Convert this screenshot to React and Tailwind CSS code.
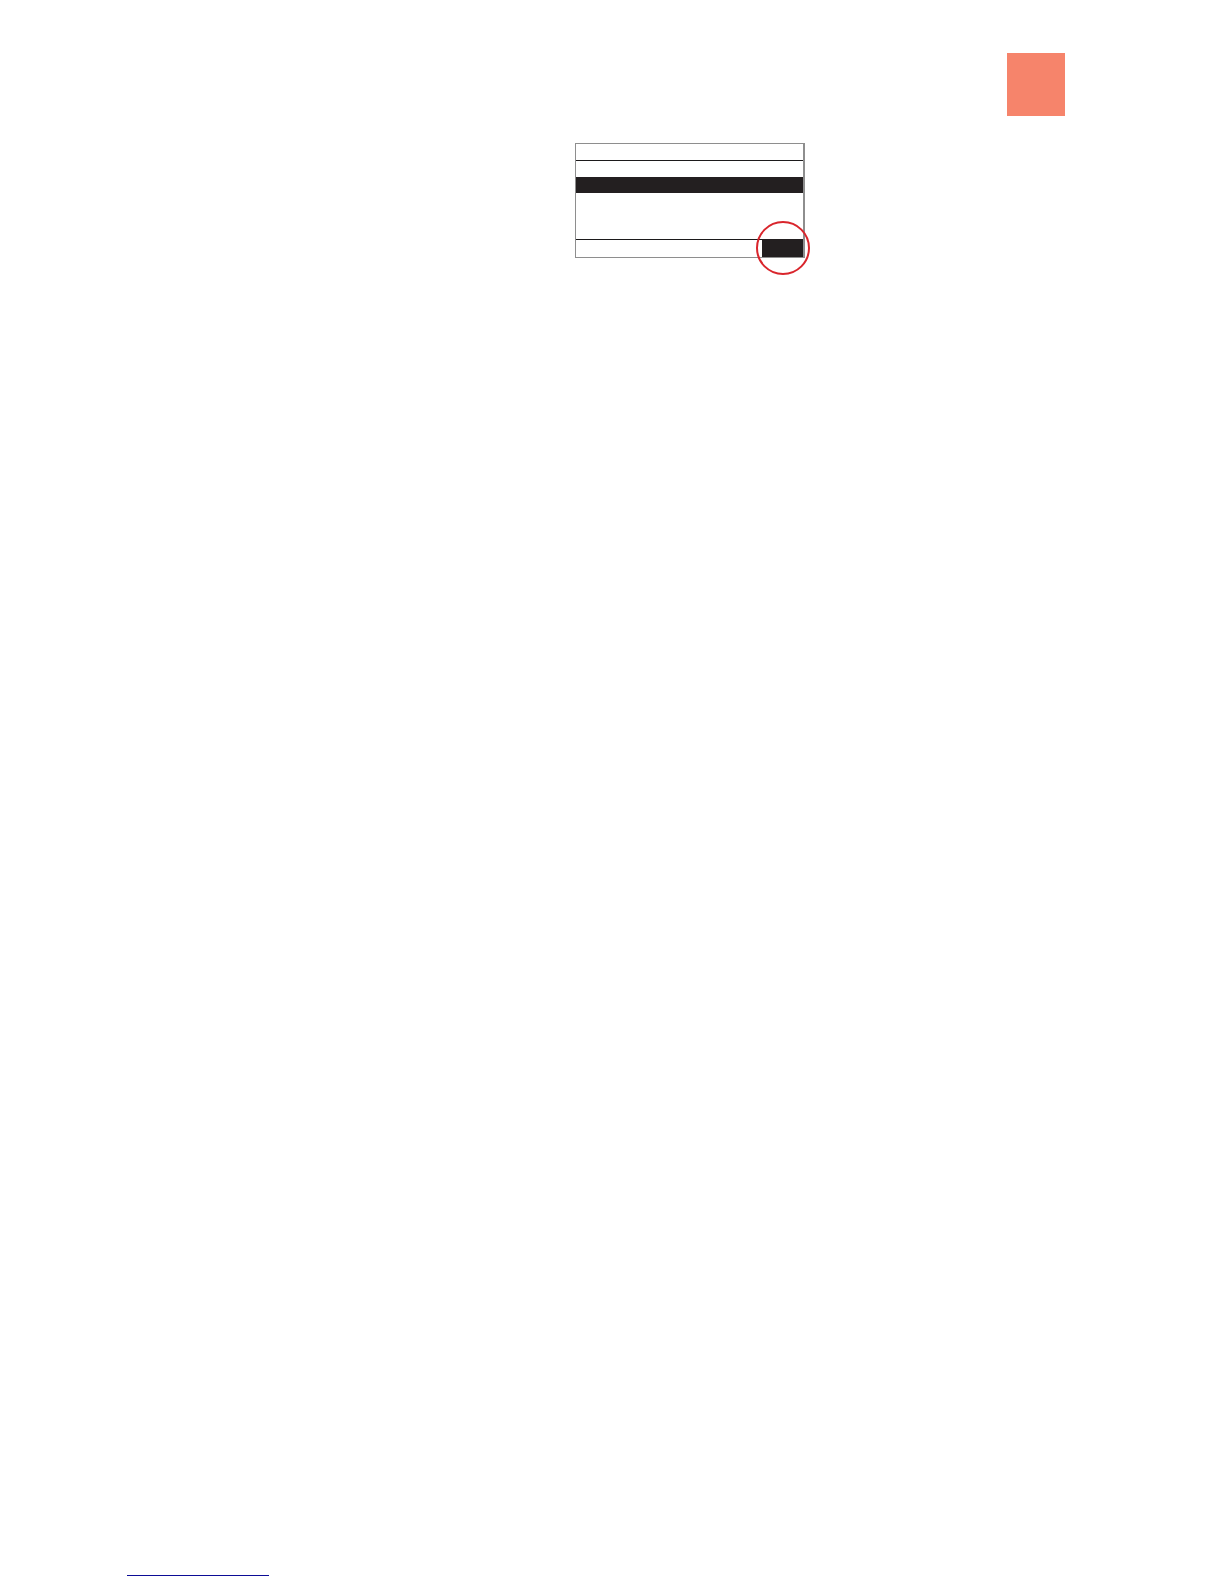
import React from "react";

const PageTab = () => (
  <div className="flex justify-end">
    <div className="h-[63px] w-[58px] bg-[#f6846b]" />
  </div>
);

const Highlight = () => (
  <svg
    className="pointer-events-none absolute -right-2 -bottom-[19px] h-14 w-14"
    viewBox="0 0 56 56"
    fill="none"
    aria-hidden="true"
  >
    <circle cx="28" cy="28" r="26" stroke="#d9252c" strokeWidth="2" />
  </svg>
);

const Screen = () => (
  <div className="relative w-[230px] border border-r-2 border-[#8e8e8e] bg-white">
    <div className="h-[17px] border-b border-[#1c1a1b]" />

    {/* Menu rows, the second one is selected */}
    <div className="h-4" />
    <div className="h-4 bg-[#231f20]" />
    <div className="h-[46px]" />

    {/* Soft keys */}
    <div className="flex h-[18px] justify-end">
      <div className="flex-1 border-t border-[#1c1a1b]" />
      <button type="button" aria-label="OK" className="w-[41px] bg-[#231f20]" />
    </div>

    <Highlight />
  </div>
);

export default function App() {
  return (
    <div className="flex min-h-screen flex-col bg-white pt-[53px] pr-[159px] pb-2 pl-[127px]">
      <PageTab />
      <main className="mt-[27px] pl-112">
        <Screen />
      </main>
      <footer className="mt-auto">
        <div className="w-[142px] border-b border-[#0c0c96]" />
      </footer>
    </div>
  );
}
